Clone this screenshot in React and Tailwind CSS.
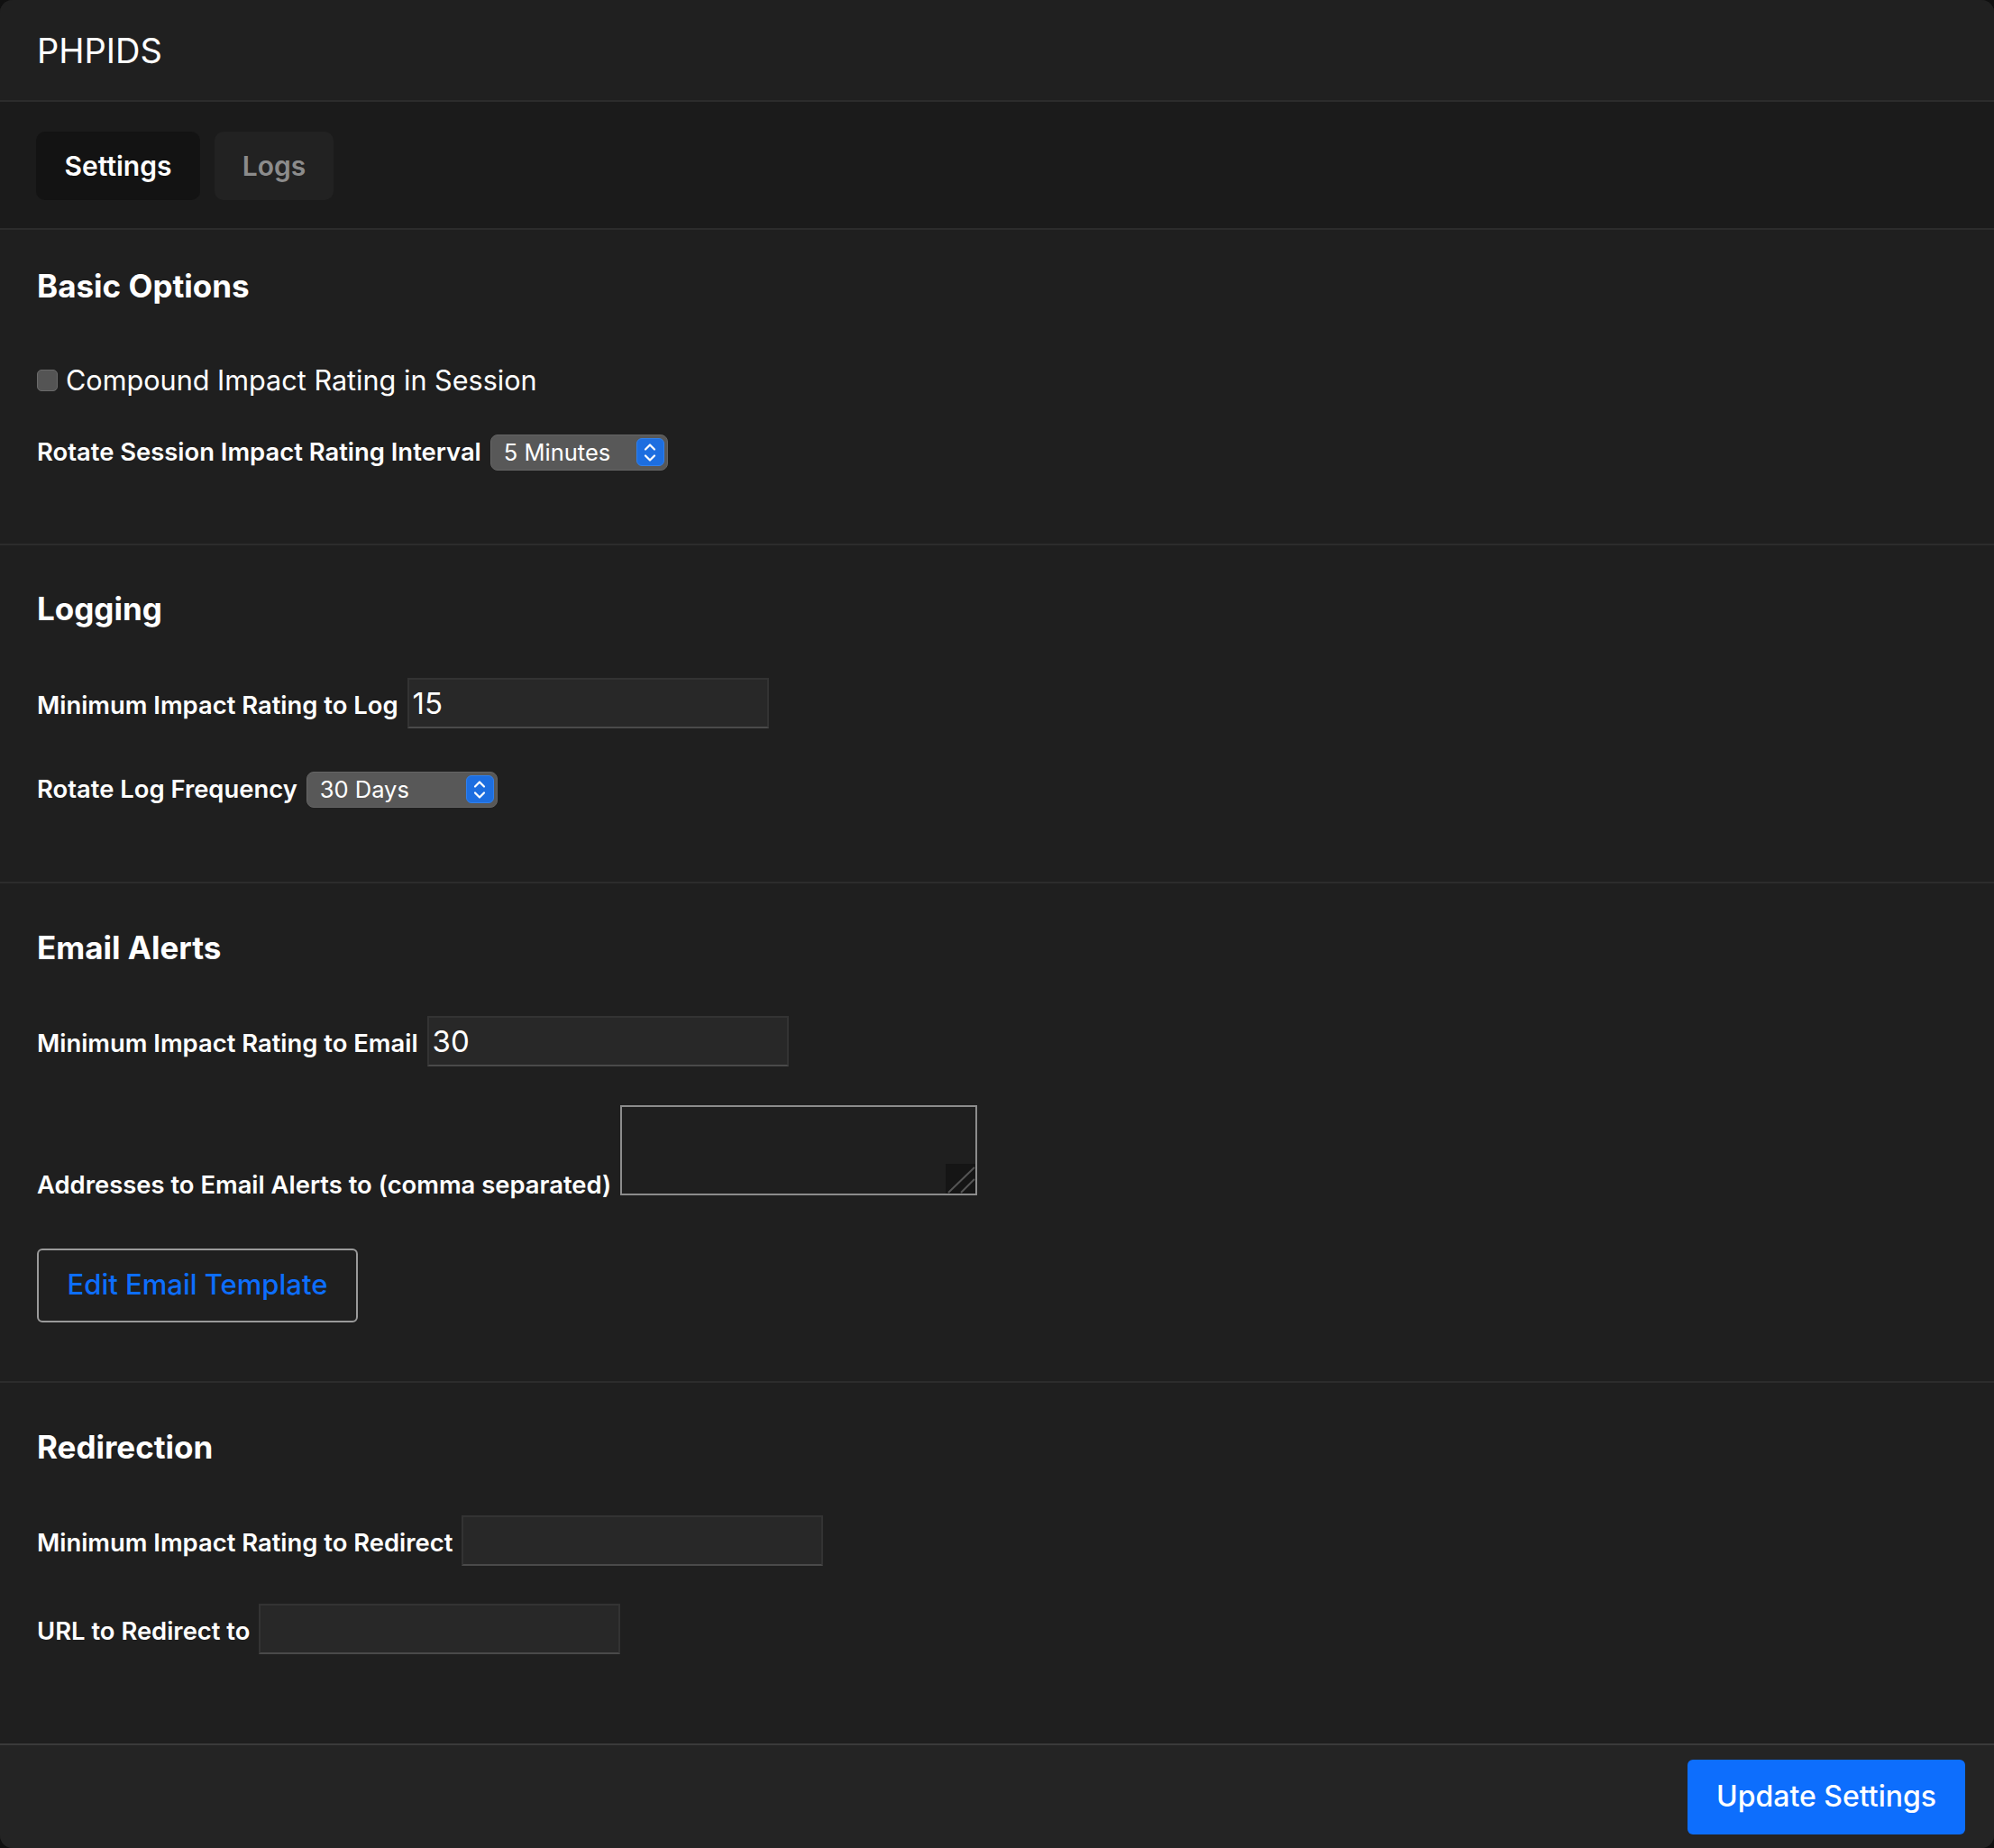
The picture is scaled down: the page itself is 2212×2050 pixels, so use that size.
import { useState } from 'react'

const FONT = { fontFamily: 'Inter, "Noto Sans", sans-serif' }

function Label({ children, className = '' }) {
  return <span className={`text-[27.4px] leading-none font-semibold text-white whitespace-nowrap ${className}`}>{children}</span>
}

function TextInput({ value, width = 'w-[401px]' }) {
  return (
    <input
      type="text"
      defaultValue={value}
      className={`${width} h-[56px] px-[4px] text-[33px] text-white bg-[#282828] border-2 border-[#333333] border-b-[#4a4a4a] outline-none`}
    />
  )
}

function Stepper() {
  return (
    <span className="w-[31px] h-[31px] rounded-[6px] bg-[#1d6ee0] border border-[#2f80ee] flex items-center justify-center">
      <svg width="20" height="26" viewBox="0 0 20 26" fill="none" stroke="white" strokeWidth="2.2" strokeLinecap="round" strokeLinejoin="round">
        <path d="M5 9.5 L10 4.5 L15 9.5" />
        <path d="M5 16.5 L10 21.5 L15 16.5" />
      </svg>
    </span>
  )
}

function Select({ value, width }) {
  return (
    <div className={`${width} h-[40px] rounded-[8px] bg-[#585858] border border-[#656565] flex items-center justify-between pl-[14px] pr-[3px]`}>
      <span className="text-[25.5px] leading-none text-white">{value}</span>
      <Stepper />
    </div>
  )
}

function SectionTitle({ children }) {
  return <h2 className="text-[35px] leading-none font-bold text-white">{children}</h2>
}

export default function App() {
  const [tab, setTab] = useState('settings')
  const [compound, setCompound] = useState(false)

  return (
    <div className="min-h-[2050px] bg-[#101010]" style={FONT}>
      <div className="h-[2050px] flex flex-col rounded-[14px] overflow-hidden bg-[#1f1f1f]">
        {/* Header */}
        <div className="h-[113px] shrink-0 px-[41px] flex items-center bg-[#202020] border-b-2 border-[#2c2c2c]">
          <h1 className="text-[38px] leading-none text-white">PHPIDS</h1>
        </div>

        {/* Tabs */}
        <div className="shrink-0 bg-[#1b1b1b] px-[40px] pt-[33px] pb-[31px] border-b-2 border-[#2c2c2c] flex gap-[16px]">
          <button
            onClick={() => setTab('settings')}
            className={`w-[182px] h-[76px] rounded-[10px] text-[30px] font-semibold ${tab === 'settings' ? 'bg-[#131313] text-white' : 'bg-[#222222] text-[#8c8c8c]'}`}
          >
            Settings
          </button>
          <button
            onClick={() => setTab('logs')}
            className={`w-[132px] h-[76px] rounded-[10px] text-[30px] font-semibold ${tab === 'logs' ? 'bg-[#131313] text-white' : 'bg-[#222222] text-[#8c8c8c]'}`}
          >
            Logs
          </button>
        </div>

        {/* Basic Options */}
        <section className="shrink-0 px-[41px] pt-[45px] pb-[81px] border-b-2 border-[#2c2c2c]">
          <SectionTitle>Basic Options</SectionTitle>
          <label className="mt-[72px] flex items-center gap-[9px]">
            <span
              onClick={() => setCompound((c) => !c)}
              className={`w-[23px] h-[24px] rounded-[5px] border border-[#6a6a6a] ${compound ? 'bg-[#1d6ee0]' : 'bg-[#545454]'}`}
            />
            <span className="text-[30.6px] leading-none text-white">Compound Impact Rating in Session</span>
          </label>
          <div className="mt-[44px] flex items-center gap-[10px]">
            <Label>Rotate Session Impact Rating Interval</Label>
            <Select value="5 Minutes" width="w-[197px]" />
          </div>
        </section>

        {/* Logging */}
        <section className="shrink-0 px-[41px] pt-[53px] pb-[82px] border-b-2 border-[#2c2c2c]">
          <SectionTitle>Logging</SectionTitle>
          <div className="mt-[59px] flex items-baseline gap-[10px]">
            <Label>Minimum Impact Rating to Log</Label>
            <TextInput value="15" />
          </div>
          <div className="mt-[48px] flex items-center gap-[10px]">
            <Label>Rotate Log Frequency</Label>
            <Select value="30 Days" width="w-[212px]" />
          </div>
        </section>

        {/* Email Alerts */}
        <section className="shrink-0 px-[41px] pt-[54px] pb-[65px] border-b-2 border-[#2c2c2c]">
          <SectionTitle>Email Alerts</SectionTitle>
          <div className="mt-[58px] flex items-baseline gap-[10px]">
            <Label>Minimum Impact Rating to Email</Label>
            <TextInput value="30" />
          </div>
          <div className="mt-[43px] flex items-end gap-[10px]">
            <Label className="mb-[-3px]">Addresses to Email Alerts to (comma separated)</Label>
            <div className="relative w-[396px] h-[100px]">
              <textarea className="w-full h-full block resize-none bg-transparent border-2 border-[#8c8c8c] outline-none text-white text-[26px] p-[4px]" />
              <svg className="absolute right-[2px] bottom-[2px]" width="33" height="33" viewBox="0 0 33 33">
                <rect width="33" height="33" fill="#151515" />
                <path d="M3 32 L32 4" stroke="#555" strokeWidth="2" />
                <path d="M17 32 L32 17" stroke="#555" strokeWidth="2" />
              </svg>
            </div>
          </div>
          <button className="mt-[59px] w-[356px] h-[82px] rounded-[6px] border-2 border-[#9a9a9a] text-[31px] font-medium text-[#0d6efd]">
            Edit Email Template
          </button>
        </section>

        {/* Redirection */}
        <section className="shrink-0 px-[41px] pt-[54px] pb-[99px]">
          <SectionTitle>Redirection</SectionTitle>
          <div className="mt-[58px] flex items-baseline gap-[10px]">
            <Label>Minimum Impact Rating to Redirect</Label>
            <TextInput value="" />
          </div>
          <div className="mt-[42px] flex items-baseline gap-[10px]">
            <Label>URL to Redirect to</Label>
            <TextInput value="" />
          </div>
        </section>

        {/* Footer */}
        <div className="flex-1 bg-[#242424] border-t-2 border-[#3a3a3a] flex justify-end items-start pt-[16px] pr-[32px]">
          <button className="w-[308px] h-[83px] rounded-[6px] bg-[#0d6efd] text-[32px] font-medium text-white">
            Update Settings
          </button>
        </div>
      </div>
    </div>
  )
}
